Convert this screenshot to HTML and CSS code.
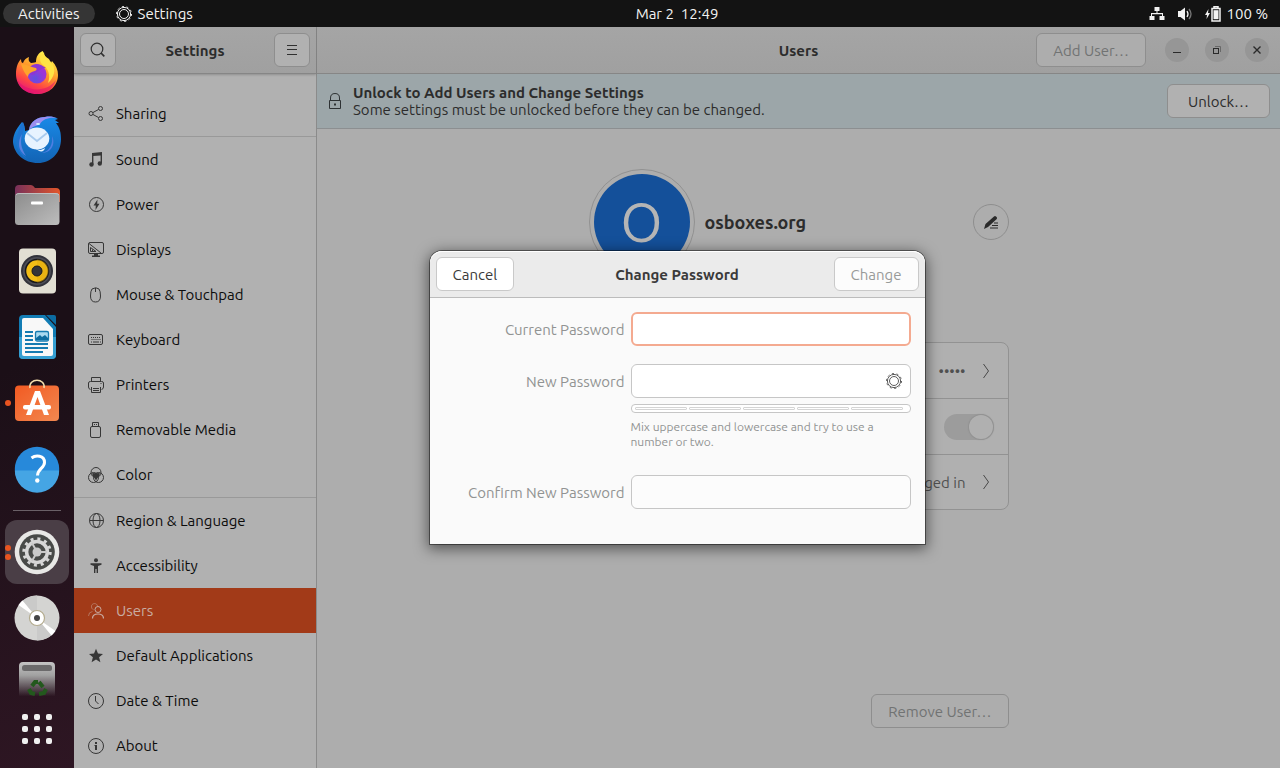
FILE: index.html
```html
<!DOCTYPE html>
<html lang="en">
<head>
<meta charset="utf-8">
<title>Settings – Users</title>
<link rel="stylesheet" href="styles.css">
</head>
<body>
<header class="topbar">
  <div class="topbar-left">
    <button class="activities">Activities</button>
    <button class="app-menu">
      <svg class="icon" viewBox="0 0 16 16"><use href="#gear"/></svg>Settings
    </button>
  </div>
  <button class="clock">Mar 2&nbsp; 12:49</button>
  <button class="status" aria-label="System menu">
    <svg class="icon" viewBox="0 0 16 16" fill="#f2f2f2"><path d="M5.500 1h5v4h-2v2H14v3h1.500v4h-5v-4H13V8.200H3V10h2.500v4h-5v-4H2V7h5.500V5h-2z"/></svg>
    <svg class="icon" viewBox="0 0 16 16"><path d="M1 5h2.500L8 1.500v13L3.500 11H1z" fill="#f2f2f2"/><path d="M10 5q2 3 0 6" fill="none" stroke="#f2f2f2" stroke-width="1.300"/><path d="M12 3q4 5 0 10" fill="none" stroke="#777" stroke-width="1.300"/></svg>
    <svg class="icon" viewBox="0 0 16 16"><path d="M3.500 3L0 9h2l-.5 4L5 7H3z" fill="#f2f2f2"/><path d="M9 2V.8h4V2M7 2.500h8V15H7z" fill="none" stroke="#f2f2f2" stroke-width="1.500"/><path d="M8.500 4.200h5v9h-5z" fill="#f2f2f2"/></svg>
    <span>100 %</span>
  </button>
</header>

<div class="desktop">
  <nav class="dock" aria-label="Dock">
    <button class="dock-item" aria-label="Firefox">
      <svg viewBox="0 0 48 48">
        <defs>
          <linearGradient id="fx" x1=".75" y1=".1" x2=".3" y2="1"><stop offset="0" stop-color="#fff04a"/><stop offset=".4" stop-color="#ff9a2b"/><stop offset=".72" stop-color="#ff4a42"/><stop offset="1" stop-color="#e5147e"/></linearGradient>
          <radialGradient id="fxg" cx=".4" cy=".75"><stop offset="0" stop-color="#5b52e0"/><stop offset="1" stop-color="#9b35d8"/></radialGradient>
        </defs>
        <path d="M24 45C11 45 3 36 3 25c0-7 2-12 5-15 0 3 1 4 2 4 1-3 3-5 6-6-1 3 0 5 2 6 3 0 5-1 5-1 0-5 2-9 7-11 0 4 3 6 6 8l2 4 1-2c4 4 6 9 6 14 0 11-9 19-21 19z" fill="url(#fx)"/>
        <path d="M4 30c5 11 28 16 39 1-3 9-10 14-19 14S6 39 4 30z" fill="#e0106f" opacity=".55"/>
        <path d="M31 3c0 5 4 7 7 10 6 7 3 16-3 21 3-8 0-15-5-18-4-3-4-9 1-13z" fill="#ffe445"/>
        <circle cx="24" cy="25" r="9.500" fill="url(#fxg)"/>
        <path d="M16 19c3-4 8-5 12-3l5 3c-4 0-5 2-8 3l-5 4c-3 0-5-4-4-7z" fill="#8d35d3"/>
        <path d="M8 15c6 0 9 3 15 4 2 2-1 3-4 4-2 1-4 2-4 5-3-3-5-7-7-13z" fill="#ffa42b"/>
      </svg>
    </button>
    <button class="dock-item" aria-label="Thunderbird">
      <svg viewBox="0 0 48 48">
        <defs><linearGradient id="tb" x1="0" y1="0" x2="0" y2="1"><stop offset="0" stop-color="#1a8ae8"/><stop offset="1" stop-color="#1263b4"/></linearGradient></defs>
        <path d="M16 15C17 6 25 2 32 2c6-1 10 0 13 2l-3 1 4 3h-3c4 5 5 10 5 16 0 14-10 24-23 24C11 48 1 39 0 27c0-6 2-12 9-20 3 3 3 6 3 9z" fill="url(#tb)"/>
        <path d="M16 15C17 6 25 2 32 2c5-1 9 0 12 1-8-1-14 1-17 6-3 2-7 2-11 6z" fill="#9b8df0"/>
        <path d="M5 18c-4 9-1 20 9 26C6 36 7 28 9 20c2-4 3-9 1-13-3 3-4 7-5 11z" fill="#1d72cf"/>
        <path d="M9 19c-5 8-4 17 4 22-5-8-6-14-4-22z" fill="#5a82e0"/>
        <ellipse cx="24" cy="23.500" rx="12.300" ry="11" fill="#e7f3ff"/>
        <path d="M14 18l10 8 10-8" fill="none" stroke="#a9cbee" stroke-width="1.800"/>
        <path d="M22 33c4 3 7 2 10 0-1 4-5 5-10 0z" fill="#e7f3ff"/>
        <path d="M29 38c8-2 11-9 10-17 4 8-1 17-10 17z" fill="#4e7fe2"/>
        <ellipse cx="25" cy="9" rx="2" ry="1" fill="#d4edff"/>
      </svg>
    </button>
    <button class="dock-item" aria-label="Files">
      <svg viewBox="0 0 48 48">
        <defs>
          <linearGradient id="fo"><stop offset="0" stop-color="#77305a"/><stop offset="1" stop-color="#e3562a"/></linearGradient>
          <linearGradient id="fg" x1="0" y1="0" x2="1" y2="1"><stop offset="0" stop-color="#8c8c8c"/><stop offset="1" stop-color="#bdbdbd"/></linearGradient>
        </defs>
        <path d="M2 8q0-4 4-4h12q2 0 4 3h21q4 0 4 4v10H2z" fill="url(#fo)"/>
        <rect x="2" y="12" width="44.500" height="32" rx="3.500" fill="url(#fg)"/>
        <path d="M3 14q1-1.500 3-1.500h36q3 0 4 1.500" fill="none" stroke="#c9c9c9" stroke-width=".8"/>
        <rect x="18" y="20.500" width="12" height="3" rx="1" fill="#fff"/>
      </svg>
    </button>
    <button class="dock-item" aria-label="Rhythmbox">
      <svg viewBox="0 0 48 48">
        <rect x="6" y="1.500" width="37" height="45" rx="4" fill="#e2dfd3"/>
        <circle cx="24" cy="24" r="16" fill="#32333b"/><circle cx="24" cy="24" r="14" fill="#4c4d55"/>
        <circle cx="24" cy="24" r="11.500" fill="#f2bd16" stroke="#17171b" stroke-width="1.500"/>
        <path d="M24 12.500a11.500 11.500 0 0 1 0 23z" fill="#dda50c" opacity=".4"/>
        <circle cx="24" cy="24" r="5" fill="#333439" stroke="#19191c"/>
      </svg>
    </button>
    <button class="dock-item" aria-label="LibreOffice Writer">
      <svg viewBox="0 0 48 48">
        <path d="M10 2h22l11 12v28q0 4-4 4H10q-4 0-4-4V6q0-4 4-4z" fill="#127cb4"/>
        <path d="M6 24h37v18q0 4-4 4H10q-4 0-4-4z" fill="#359fd2"/>
        <path d="M33 2h8q2 0 2 2v8z" fill="#0c6ca2"/>
        <path d="M11 5h19l10 11v25q0 2-2 2H11q-2 0-2-2V7q0-2 2-2z" fill="#f8f8f8"/>
        <path d="M12 19h8M12 23h8M12 27h8M12 31h23M12 35h23M12 39h18" stroke="#167bb1" stroke-width="2"/>
        <rect x="22.500" y="18.500" width="13" height="9.500" rx="1.500" fill="#a9d9f0" stroke="#167bb1" stroke-width="1.300"/>
        <path d="M23 27v-2l4-3 2 2 3-2 3 3v2z" fill="#0e6c9f"/>
      </svg>
    </button>
    <button class="dock-item" aria-label="Software">
      <span class="dots"><i></i></span>
      <svg viewBox="0 0 48 48">
        <defs><linearGradient id="so" x1="0" y1="0" x2="1" y2="1"><stop offset="0" stop-color="#f25a22"/><stop offset="1" stop-color="#f28850"/></linearGradient></defs>
        <rect x="2" y="6.500" width="44" height="35.500" rx="4" fill="url(#so)"/>
        <path d="M17 9C16 4 20 1.200 24 1.200S32 4 31 9" fill="none" stroke="#f4dfac" stroke-width="1.500"/>
        <path d="M22 12h5l9 24h-5l-6.500-18L18 36h-5z" fill="#fff"/>
        <rect x="10" y="26" width="28" height="4.500" rx="2" fill="#fff"/>
      </svg>
    </button>
    <button class="dock-item" aria-label="Help">
      <svg viewBox="0 0 48 48">
        <circle cx="24" cy="24" r="22.200" fill="#2789da"/>
        <path d="M1.800 25.500h44.400a22.200 22.200 0 0 1-44.400 0z" fill="#45a5e4"/>
        <path d="M18.500 13c4-3 13-3 13 4.500 0 5.500-7 6.500-7 13" fill="none" stroke="#fff" stroke-width="3"/>
        <circle cx="24.300" cy="35.500" r="2.200" fill="#fff"/>
      </svg>
    </button>
    <hr class="dock-sep">
    <button class="dock-item is-active" aria-label="Settings">
      <span class="dots"><i></i><i></i></span>
      <svg viewBox="0 0 48 48">
        <circle cx="24" cy="24" r="22.300" fill="#e8e8e6"/><circle cx="24" cy="24" r="17.800" fill="#484a48"/>
        <circle cx="24" cy="24" r="13.200" fill="none" stroke="#d6d6d6" stroke-width="3" stroke-dasharray="3 3.910"/>
        <circle cx="24" cy="24" r="10.400" fill="none" stroke="#d6d6d6" stroke-width="3.500"/>
        <circle cx="24" cy="24" r="4.500" fill="#c9c9c9"/>
        <path d="M24 24h10M24 24l-5-9M24 24l-5 9" stroke="#c9c9c9" stroke-width="2"/>
      </svg>
    </button>
    <button class="dock-item" aria-label="Optical disc">
      <svg viewBox="0 0 48 48">
        <circle cx="24" cy="24" r="22.500" fill="#d4d4d2"/>
        <path d="M24 24V1.500A22.500 22.500 0 0 0 6 10.500zM24 24v22.500a22.500 22.500 0 0 0 18-9z" fill="#cacac9"/>
        <path d="M24 24L5.500 11l4-4.500zM24 24l18.500 13-4 4.500z" fill="#fff"/>
        <circle cx="24" cy="24" r="7.500" fill="#fff" stroke="#b3ab8e" stroke-width="1.200"/>
        <circle cx="24" cy="24" r="3" fill="#454545"/>
      </svg>
    </button>
    <button class="dock-item is-cut" aria-label="Trash">
      <svg viewBox="0 0 48 48">
        <defs><linearGradient id="tr" x1="0" y1="0" x2="0" y2="1"><stop offset="0" stop-color="#c4c4c4"/><stop offset=".3" stop-color="#a2a2a2"/><stop offset=".78" stop-color="#a2a2a2" stop-opacity="0"/></linearGradient></defs>
        <path d="M6 46V6q0-4 4-4h28q4 0 4 4v40z" fill="url(#tr)"/>
        <rect x="9" y="5" width="30" height="6" rx="2.500" fill="#6b6a6b"/>
        <g fill="none" stroke="#23581d" stroke-width="4"><path d="M19 26l3-4h3M26 22l4 5M16 29l2 4 4 1M33 29l-2 4-5 1"/></g>
      </svg>
    </button>
    <button class="apps" aria-label="Show Applications"><i></i><i></i><i></i><i></i><i></i><i></i><i></i><i></i><i></i></button>
  </nav>

  <div class="window">
    <aside class="sidebar">
      <div class="headerbar side-header">
        <button class="btn square" aria-label="Search"><svg class="icon" viewBox="0 0 16 16" fill="none" stroke="#303030" stroke-width="1.200"><circle cx="7" cy="7" r="5.800"/><path d="M11 11l3.300 3.300" stroke-width="1.700"/></svg></button>
        <h2 class="title">Settings</h2>
        <button class="btn square" aria-label="Menu"><svg class="icon" viewBox="0 0 16 16" stroke="#303030" stroke-width="1"><path d="M3 3.500h10M3 7.500h10M3 12.500h10"/></svg></button>
      </div>
      <nav class="side-list">
        <a href="#"><svg class="icon" viewBox="0 0 16 16" fill="none" stroke="currentColor"><circle cx="3" cy="7.500" r="2"/><circle cx="12.500" cy="2.500" r="2"/><circle cx="12.500" cy="12.500" r="2"/><path d="M5 6.500l5.500-3M5 8.500l5.500 3"/></svg>Sharing</a>
        <a href="#" class="ruled"><svg class="icon" viewBox="0 0 16 16"><path d="M4 1l10-1v11h-1.400V3.500L5.400 4v8H4z" fill="currentColor"/><circle cx="3.500" cy="12.500" r="2.200" fill="currentColor"/><circle cx="11.800" cy="11.500" r="2.200" fill="currentColor"/></svg>Sound</a>
        <a href="#"><svg class="icon" viewBox="0 0 16 16"><circle cx="8.500" cy="7.500" r="7" fill="none" stroke="currentColor"/><path d="M9.500 2.500L5.500 8.500h2.300L7.500 13l4-6.200H9.200z" fill="currentColor"/></svg>Power</a>
        <a href="#"><svg class="icon" viewBox="0 0 16 16" fill="none" stroke="currentColor"><rect x=".5" y=".5" width="15" height="11" rx="1.500"/><path d="M1 1.500l12 9.500M2.500 5.500v4h5.500zM4.500 7.500V9"/><path d="M6 12h4v1.500h2V15H4v-1.500h2z" fill="currentColor" stroke="none"/></svg>Displays</a>
        <a href="#"><svg class="icon" viewBox="0 0 16 16" fill="none" stroke="currentColor"><path d="M4 2q4-2.500 7 0 1.500 2 1.500 7 0 6-5 6t-5-6q0-5 1.500-7zM7.500 1v4"/></svg>Mouse &amp; Touchpad</a>
        <a href="#"><svg class="icon" viewBox="0 0 16 16" fill="none" stroke="currentColor"><rect x=".5" y="2.500" width="14" height="10" rx="1.500"/><path d="M3 5.500h10M3.500 7.500h9" stroke-dasharray="1 1"/><path d="M3 10h1M5 10h6M12 10h1"/></svg>Keyboard</a>
        <a href="#"><svg class="icon" viewBox="0 0 16 16" fill="none" stroke="currentColor"><path d="M3.500 4.500v-4h9v4M2.500 12.500Q.5 12 .5 10V6q0-1.500 2-1.500h11q2 0 2 1.500v4q0 2-2 2.500M3.500 10v5.500h9V10M5 11.500h6M5 13.500h6M12.500 6.500h1"/></svg>Printers</a>
        <a href="#"><svg class="icon" viewBox="0 0 16 16" fill="none" stroke="currentColor"><rect x="2.500" y="4.500" width="10" height="11" rx="1.500"/><path d="M4.500 4V.5h6V4M6 2.500h1M8 2.500h1"/></svg>Removable Media</a>
        <a href="#"><svg class="icon" viewBox="0 0 16 16" fill="none" stroke="currentColor"><circle cx="8" cy="5.500" r="5"/><circle cx="5.500" cy="10.500" r="5"/><circle cx="10.500" cy="10.500" r="5"/><path d="M4 6.500q2-1 4 .3 2-1.300 4-.3-.5 2.500-2 3.500L8 13.500 6 10Q4.500 9 4 6.500z" fill="currentColor" stroke="none"/></svg>Color</a>
        <a href="#" class="ruled"><svg class="icon" viewBox="0 0 16 16" fill="none" stroke="currentColor"><circle cx="8.500" cy="7.500" r="7"/><ellipse cx="8.500" cy="7.500" rx="3.500" ry="7"/><path d="M1.500 7.500h14"/></svg>Region &amp; Language</a>
        <a href="#"><svg class="icon" viewBox="0 0 16 16" fill="currentColor"><circle cx="8" cy="2.200" r="2"/><path d="M2.500 5.300h11v1.400L10 8v7H8.600v-4H7.400v4H6V8L2.500 6.700z"/></svg>Accessibility</a>
        <a href="#" class="is-selected" aria-current="page"><svg class="icon" viewBox="0 0 16 16" fill="none" stroke="currentColor"><g opacity=".5"><path d="M9.500 3C9-.5 3-.2 3.500 4c.2 1.500 1 2.300 2 2.800M.5 13q0-4 4-4.500"/></g><circle cx="10" cy="6.500" r="3"/><path d="M4.500 15.500q0-4.500 5.500-4.500t5.500 4.500" stroke-width="1.200"/></svg>Users</a>
        <a href="#"><svg class="icon" viewBox="0 0 16 16" fill="currentColor"><path d="M8 .8l2 4.800 5 .3-3.900 3.300 1.300 5L8 11.500l-4.400 2.700 1.300-5L1 5.900l5-.3z"/></svg>Default Applications</a>
        <a href="#"><svg class="icon" viewBox="0 0 16 16" fill="none" stroke="currentColor"><circle cx="8" cy="8" r="7.500"/><path d="M7.500 3v5l3 3"/></svg>Date &amp; Time</a>
        <a href="#"><svg class="icon" viewBox="0 0 16 16"><circle cx="8" cy="8" r="7.500" fill="none" stroke="currentColor"/><path d="M7 4h2v2H7zM6.500 7H9v5H7V8h-.5z" fill="currentColor"/></svg>About</a>
      </nav>
    </aside>

    <main class="main">
      <div class="headerbar main-header">
        <h1 class="title">Users</h1>
        <div class="main-actions">
          <button class="btn" disabled>Add User…</button>
          <button class="win-btn" aria-label="Minimize"><svg class="icon" viewBox="0 0 16 16" stroke="#2a2a2a"><path d="M4 10.500h8"/></svg></button>
          <button class="win-btn" aria-label="Restore"><svg class="icon" viewBox="0 0 16 16" fill="none" stroke="#2a2a2a"><path d="M6 4.500h5.500V10" stroke="#686868"/><rect x="4.500" y="6.500" width="5" height="5"/></svg></button>
          <button class="win-btn" aria-label="Close"><svg class="icon" viewBox="0 0 16 16" stroke="#2a2a2a" stroke-width="1.400"><path d="M4.500 4.500l7 7M11.500 4.500l-7 7"/></svg></button>
        </div>
      </div>

      <section class="banner">
        <svg class="icon" viewBox="0 0 16 16" fill="none" stroke="#2e3234"><path d="M3.500 7.500V5q0-4.500 4.500-4.500T12.500 5v2.500"/><path d="M2.500 7.500h11v8h-11z"/><path d="M7 10.500h2v2H7z" fill="#2e3234" stroke="none"/></svg>
        <div class="banner-text">
          <strong>Unlock to Add Users and Change Settings</strong>
          <span>Some settings must be unlocked before they can be changed.</span>
        </div>
        <button class="btn unlock">Unlock…</button>
      </section>

      <section class="content">
        <div class="profile">
          <div class="avatar"><span>O</span></div>
          <h2 class="user-name">osboxes.org</h2>
          <button class="edit" aria-label="Edit name"><svg class="icon" viewBox="0 0 16 16" fill="#2a2a2a"><path d="M1 15l1.500-5L11 2.500q1-1 2 0l.8.8q.7 1-.3 2L5 13z"/><path d="M11 8.500h4v1h-4zM9 11h6v1H9zM7 13.500h8v1H7z"/></svg></button>
        </div>
        <div class="card">
          <button class="row"><span>•••••</span><svg class="icon" viewBox="0 0 16 16" fill="none" stroke="#484848"><path d="M5.500 1l5 7-5 7"/></svg></button>
          <div class="row"><input class="switch" type="checkbox" role="switch" aria-label="Automatic login" checked disabled></div>
          <button class="row"><span>Logged in</span><svg class="icon" viewBox="0 0 16 16" fill="none" stroke="#484848"><path d="M5.500 1l5 7-5 7"/></svg></button>
        </div>
        <button class="btn remove" disabled>Remove User…</button>
      </section>
    </main>

    <div class="backdrop">
      <form class="dialog" role="dialog" aria-labelledby="dialog-title">
        <div class="dialog-header">
          <div class="start"><button class="dlg-btn" type="button">Cancel</button></div>
          <h2 class="title" id="dialog-title">Change Password</h2>
          <div class="end"><button class="dlg-btn" type="submit" disabled>Change</button></div>
        </div>
        <div class="fields">
          <label for="current">Current Password</label>
          <input class="entry is-focused" id="current" type="password">
          <label class="gap" for="new">New Password</label>
          <div class="entry-wrap gap">
            <input class="entry" id="new" type="password">
            <button class="entry-icon" type="button" aria-label="Generate password"><svg class="icon" viewBox="0 0 16 16"><use href="#gear"/></svg></button>
          </div>
          <div class="strength" role="meter" aria-label="Password strength" aria-valuenow="0" aria-valuemin="0" aria-valuemax="5"><i></i><i></i><i></i><i></i><i></i></div>
          <p class="hint">Mix uppercase and lowercase and try to use a number or two.</p>
          <label for="confirm">Confirm New Password</label>
          <input class="entry" id="confirm" type="password" disabled>
        </div>
      </form>
    </div>
  </div>
</div>

<svg class="defs" aria-hidden="true">
  <symbol id="gear" viewBox="0 0 16 16"><g fill="none" stroke="currentColor"><circle cx="8" cy="8" r="6.600"/><circle cx="8" cy="8" r="4.500"/><circle cx="8" cy="8" r="7.500" stroke-dasharray="2 2.712"/></g></symbol>
</svg>
</body>
</html>
```
FILE: styles.css
```css
* { box-sizing: border-box; }

body {
  margin: 0;
  min-height: 100vh;
  display: flex;
  flex-direction: column;
  font: 15px/17px Ubuntu, "Noto Sans", sans-serif;
  color: #2c2c2c;
  background: #1e1019;
}

button, input { font: inherit; color: inherit; margin: 0; }
button { border: 0; background: none; padding: 0; white-space: nowrap; }
h1, h2, p { margin: 0; font-size: 15px; }
a { color: inherit; text-decoration: none; }
.icon { width: 16px; height: 16px; flex: none; display: block; }
.defs { position: absolute; width: 0; height: 0; }
.title { font-weight: 700; }

/* Top bar */
.topbar {
  height: 27px;
  display: grid;
  grid-template-columns: 1fr auto 1fr;
  align-items: center;
  background: #131313;
  color: #f2f2f2;
}
.topbar-left { display: flex; align-items: center; gap: 21px; padding-left: 3px; }
.activities { height: 21px; padding: 0 15px; border-radius: 11px; background: #353535; }
.app-menu { display: flex; align-items: center; gap: 6px; }
.clock { margin-left: 74px; }
.status { justify-self: end; display: flex; align-items: center; gap: 12px; padding-right: 12px; }
.status span { margin-left: -6px; }

.desktop { flex: 1; display: flex; }

/* Dock */
.dock {
  width: 74px;
  flex: none;
  padding-top: 14px;
  display: flex;
  flex-direction: column;
  align-items: center;
  gap: 2px;
  background: linear-gradient(160deg, #1b0f17 45%, #2e1623);
}
.dock-item {
  position: relative;
  width: 64px;
  height: 64px;
  flex: none;
  display: flex;
  align-items: center;
  justify-content: center;
  border-radius: 12px;
}
.dock-item svg { width: 48px; height: 48px; flex: none; }
.dock-item.is-active { background: #4a3e46; }
.dock-item.is-cut { height: 44px; align-items: flex-start; padding-top: 8px; overflow: hidden; border-radius: 0; }
.dots {
  position: absolute;
  left: 0;
  top: 0;
  bottom: 0;
  display: flex;
  flex-direction: column;
  justify-content: center;
  gap: 3px;
}
.dots i { width: 6px; height: 6px; border-radius: 50%; background: #e95420; }
.dock-sep { width: 48px; height: 1px; margin: 7px 0; border: 0; background: #6a6067; }
.apps { display: grid; grid-template-columns: repeat(3, 6px); gap: 6px; margin-top: 16px; }
.apps i { height: 6px; border-radius: 2px; background: #f0f0f0; }

/* Window */
.window { position: relative; flex: 1; display: flex; min-width: 0; }
.headerbar {
  height: 47px;
  padding: 0 6px;
  border-bottom: 1px solid #868686;
  background: linear-gradient(#a5a5a5, #a0a0a0);
}
.btn {
  height: 34px;
  padding: 0 16px;
  border: 1px solid #8e8e8e;
  border-radius: 6px;
  background: #b1b1b1;
}
.btn:disabled { background: #adadad; color: #717373; }
.btn.square { width: 36px; padding: 0 9px; }

.sidebar { width: 243px; flex: none; border-right: 1px solid #8b8b8b; background: #b1b1b1; }
.side-header { display: flex; align-items: center; justify-content: space-between; box-shadow: 0 1px 2px #00000030; }
.side-list { display: flex; flex-direction: column; padding-top: 17px; color: #333; }
.side-list a {
  height: 45px;
  display: flex;
  align-items: center;
  gap: 12px;
  padding-left: 14px;
  color: #0c0c0c;
}
.side-list .icon { color: #373737; }
.side-list .ruled { height: 46px; border-top: 1px solid #999; }
.side-list .is-selected, .side-list .is-selected .icon { color: #c9aca2; }
.side-list .is-selected { background: #a23a18; }

.main { flex: 1; min-width: 0; display: flex; flex-direction: column; background: #adadad; }
.main-header { display: grid; grid-template-columns: 1fr auto 1fr; align-items: center; }
.main-header .title { grid-column: 2; }
.main-actions { justify-self: end; display: flex; align-items: center; gap: 16px; padding-right: 5px; }
.main-actions .btn { margin-right: 3px; }
.win-btn { width: 24px; height: 24px; padding: 4px; border-radius: 50%; background: #969696; }

.banner {
  height: 55px;
  display: flex;
  align-items: center;
  gap: 10px;
  padding: 0 10px;
  border-bottom: 1px solid #8c8f91;
  background: #9ca6a9;
}
.banner-text { flex: 1; display: flex; flex-direction: column; }
.unlock { padding: 0 20px; }

.content {
  flex: 1;
  width: 420px;
  margin: 0 auto;
  padding: 40px 0;
  display: flex;
  flex-direction: column;
}
.profile { display: flex; align-items: center; gap: 10px; }
.avatar {
  width: 106px;
  height: 106px;
  padding: 4px;
  border: 1px solid #919191;
  border-radius: 50%;
}
.avatar span {
  height: 96px;
  display: flex;
  align-items: center;
  justify-content: center;
  border-radius: 50%;
  background: #14509a;
  color: #b5b5b5;
  font-size: 54px;
}
.user-name { flex: 1; font-size: 18px; line-height: 22px; }
.edit { width: 36px; height: 36px; padding: 9px; border: 1px solid #8e8e8e; border-radius: 50%; background: #adadad; }
.card { margin-top: 67px; border: 1px solid #929292; border-radius: 8px; background: #b0b0b0; color: #505050; }
.row {
  width: 100%;
  height: 56px;
  display: flex;
  align-items: center;
  justify-content: flex-end;
  gap: 12px;
  padding-right: 14px;
}
.row + .row { border-top: 1px solid #929292; }
.row:first-child { height: 55px; }
.row:last-child { height: 55px; }
.switch {
  appearance: none;
  width: 50px;
  height: 26px;
  display: flex;
  justify-content: flex-end;
  padding: 1px;
  border-radius: 13px;
  background: #9c9c9c;
}
.switch::before { content: ""; width: 24px; height: 24px; border-radius: 50%; background: #b0b0b0; box-shadow: 0 0 1px 1px #919191; }
.remove { align-self: flex-end; margin-top: auto; }

/* Dialog */
.backdrop {
  position: absolute;
  inset: 0;
  display: flex;
  align-items: center;
  justify-content: center;
}
.dialog {
  width: 495px;
  border-radius: 12px 12px 0 0;
  background: #fafafa;
  box-shadow: 0 0 0 1px #00000070, 0 3px 14px 2px #00000080;
}
.dialog-header {
  height: 47px;
  display: grid;
  grid-template-columns: 1fr auto 1fr;
  align-items: center;
  padding: 0 6px;
  border-bottom: 1px solid #bcbcbc;
  border-radius: 12px 12px 0 0;
  background: #ebebeb;
  box-shadow: inset 0 1px #fff;
  color: #3a3a3a;
}
.end { justify-self: end; }
.dlg-btn { height: 34px; padding: 0 16px; border: 1px solid #c9c9c9; border-radius: 6px; background: #fff; }
.dlg-btn:disabled { background: #fcfcfc; color: #989a99; }
.fields {
  display: grid;
  grid-template-columns: 1fr 280px;
  column-gap: 6px;
  align-items: center;
  padding: 14px 14px 35px;
  color: #919392;
}
.fields label { text-align: right; }
.fields .gap { margin-top: 18px; }
.entry {
  width: 100%;
  height: 34px;
  display: block;
  padding: 0 8px;
  border: 1px solid #c6c6c6;
  border-radius: 6px;
  outline: 0;
  background: #fff;
  color: #3a3a3a;
}
.entry:disabled { background: #fcfcfc; }
.entry.is-focused { border: 2px solid #f4aa90; }
.entry-wrap { position: relative; }
.entry-icon { position: absolute; right: 9px; top: 9px; color: #5c5c5c; }
.strength {
  grid-column: 2;
  height: 9px;
  margin-top: 6px;
  display: flex;
  gap: 2px;
  padding: 2px 7px 2px 3px;
  border: 1px solid #c6c6c6;
  border-radius: 4px;
  background: #fff;
}
.strength i { flex: 1; border: 1px solid #d4d4d4; border-radius: 1px; }
.hint { grid-column: 2; margin: 6px 0 26px; font-size: 12px; line-height: 15px; }
```
